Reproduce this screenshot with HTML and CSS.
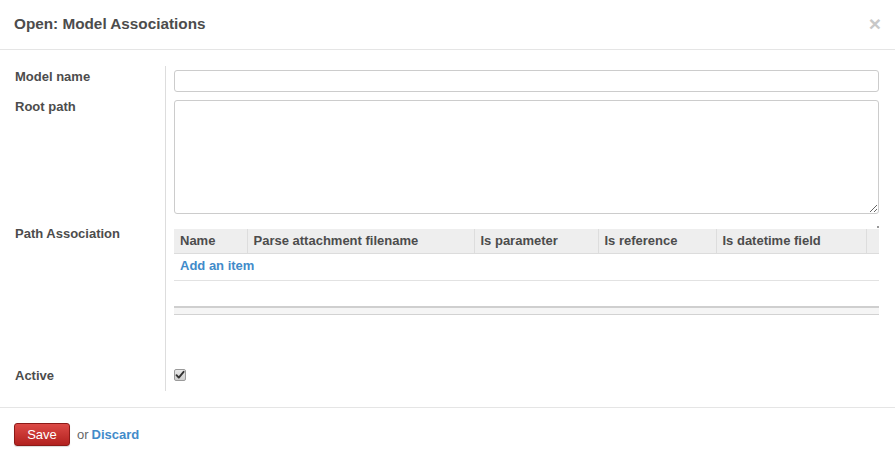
FILE: index.html
```html
<!DOCTYPE html>
<html>
<head>
<meta charset="utf-8">
<link rel="stylesheet" href="styles.css">
</head>
<body>
<div class="modal">
  <div class="modal-header">
    <h4 class="modal-title">Open: Model Associations</h4>
    <span class="close">×</span>
  </div>
  <div class="modal-body">
    <div class="form-grid">
      <div class="label r1">Model name</div>
      <div class="field r1"><input class="input" type="text"></div>

      <div class="label r2">Root path</div>
      <div class="field r2"><textarea class="textarea"></textarea></div>

      <div class="label r3 label-table">Path Association</div>
      <div class="field r3">
        <div class="list">
          <span class="list-dot"></span>
          <table class="grid">
            <colgroup>
              <col style="width:73px">
              <col style="width:227px">
              <col style="width:124px">
              <col style="width:118px">
              <col style="width:150px">
              <col style="width:13px">
            </colgroup>
            <thead>
              <tr>
                <th>Name</th>
                <th>Parse attachment filename</th>
                <th>Is parameter</th>
                <th>Is reference</th>
                <th>Is datetime field</th>
                <th></th>
              </tr>
            </thead>
            <tbody>
              <tr class="add-row"><td colspan="6"><a class="link">Add an item</a></td></tr>
              <tr class="empty-row"><td colspan="6"></td></tr>
            </tbody>
            <tfoot>
              <tr><td colspan="6"></td></tr>
            </tfoot>
          </table>
        </div>
      </div>

      <div class="label r4">Active</div>
      <div class="field r4">
        <span class="checkbox">
          <svg width="10" height="10" viewBox="0 0 10 10"><path d="M1.5 5.2 L3.8 7.6 L8.6 1.8" fill="none" stroke="#333" stroke-width="1.9" stroke-linecap="round" stroke-linejoin="round"/></svg>
        </span>
      </div>
    </div>
  </div>
  <div class="modal-footer">
    <button class="btn-save">Save</button>
    <span class="or">or</span>
    <a class="link discard">Discard</a>
  </div>
</div>
</body>
</html>
```

FILE: styles.css
```css
html, body {
  margin: 0;
  padding: 0;
  background: #ffffff;
}
body {
  font-family: "Liberation Sans", Arial, sans-serif;
  font-size: 13px;
  color: #4c4c4c;
}
.modal {
  width: 895px;
  height: 459px;
  background: #fff;
}
.modal-header {
  height: 50px;
  box-sizing: border-box;
  border-bottom: 1px solid #e5e5e5;
  display: flex;
  align-items: center;
  justify-content: space-between;
  padding: 0 14px 2px 14px;
}
.modal-title {
  margin: 0;
  font-size: 15.3px;
  font-weight: bold;
  color: #4c4c4c;
  line-height: 20px;
}
.close {
  font-size: 21px;
  font-weight: bold;
  color: #c8c8c8;
  line-height: 20px;
  margin-right: 0;
}
.modal-body {
  padding: 16px 16px 16px 15px;
  border-bottom: 1px solid #e5e5e5;
}
.form-grid {
  display: grid;
  grid-template-columns: 151px 1fr;
}
.label {
  box-sizing: border-box;
  border-right: 1px solid #ddd;
  font-weight: bold;
  line-height: 14px;
  padding-top: 4px;
  color: #4c4c4c;
}
.field {
  padding-left: 8px;
}
.r1.field { padding-top: 4px; padding-bottom: 4px; }
.r2.field { padding-top: 4px; padding-bottom: 4px; }
.r3.field { padding-top: 11px; padding-bottom: 45px; }
.r4.field { padding-top: 9px; padding-bottom: 10px; height: 12px; }
.label.r2 { padding-top: 4px; }
.label-table { padding-top: 9px; }
.label.r4 { padding-top: 9px; }

.input {
  display: block;
  box-sizing: border-box;
  width: 100%;
  height: 22px;
  margin: 0;
  border: 1px solid #ccc;
  border-radius: 3px;
  background: #fff;
  padding: 2px 4px;
  font: inherit;
  outline: none;
}
.textarea {
  display: block;
  box-sizing: border-box;
  width: 100%;
  height: 114px;
  margin: 0;
  border: 1px solid #ccc;
  border-radius: 3px;
  background: #fff;
  padding: 2px 4px;
  font: inherit;
  outline: none;
  resize: vertical;
}
.list {
  position: relative;
}
.list-dot {
  position: absolute;
  right: 0;
  top: -3px;
  width: 2px;
  height: 2px;
  background: #999;
}
.grid {
  width: 100%;
  table-layout: fixed;
  border-collapse: collapse;
  border-spacing: 0;
}
.grid th {
  background: #eeeeee;
  height: 24px;
  box-sizing: border-box;
  padding: 0 6px;
  text-align: left;
  font-weight: bold;
  font-size: 13px;
  color: #4c4c4c;
  white-space: nowrap;
  border-bottom: 1px solid #dcdcdc;
  border-left: 1px solid #dddddd;
}
.grid th:first-child {
  border-left: none;
}
.add-row td {
  height: 27px;
  box-sizing: border-box;
  padding: 0 6px 2px 6px;
  border-bottom: 1px solid #e2e2e2;
  vertical-align: middle;
}
.empty-row td {
  height: 25px;
  padding: 0;
}
.grid tfoot td {
  height: 6px;
  padding: 0;
  background: #f5f5f5;
  border-top: 2px solid #cfcfcf;
  border-bottom: 1px solid #d2d2d2;
}
.link {
  color: #428bca;
  font-weight: bold;
  text-decoration: none;
  cursor: pointer;
}
.checkbox {
  display: flex;
  align-items: center;
  justify-content: center;
  box-sizing: border-box;
  width: 12px;
  height: 12px;
  border: 1px solid #9a9a9a;
  border-radius: 2px;
  background: linear-gradient(#e8e8e8, #cfcfcf);
}
.modal-footer {
  padding: 15px 14px;
  display: flex;
  align-items: center;
  gap: 7px;
}
.btn-save {
  width: 56px;
  height: 23px;
  box-sizing: border-box;
  border: 1px solid #8c1a17;
  border-radius: 3px;
  background: linear-gradient(#dc4a46, #b2211f);
  color: #fff;
  font-family: "Liberation Sans", Arial, sans-serif;
  font-size: 13px;
  padding: 0;
  box-shadow: 0 1px 1px rgba(0,0,0,0.15);
}
.or {
  color: #666;
  margin-left: 0;
}
.discard {
  margin-left: -4px;
}
```
